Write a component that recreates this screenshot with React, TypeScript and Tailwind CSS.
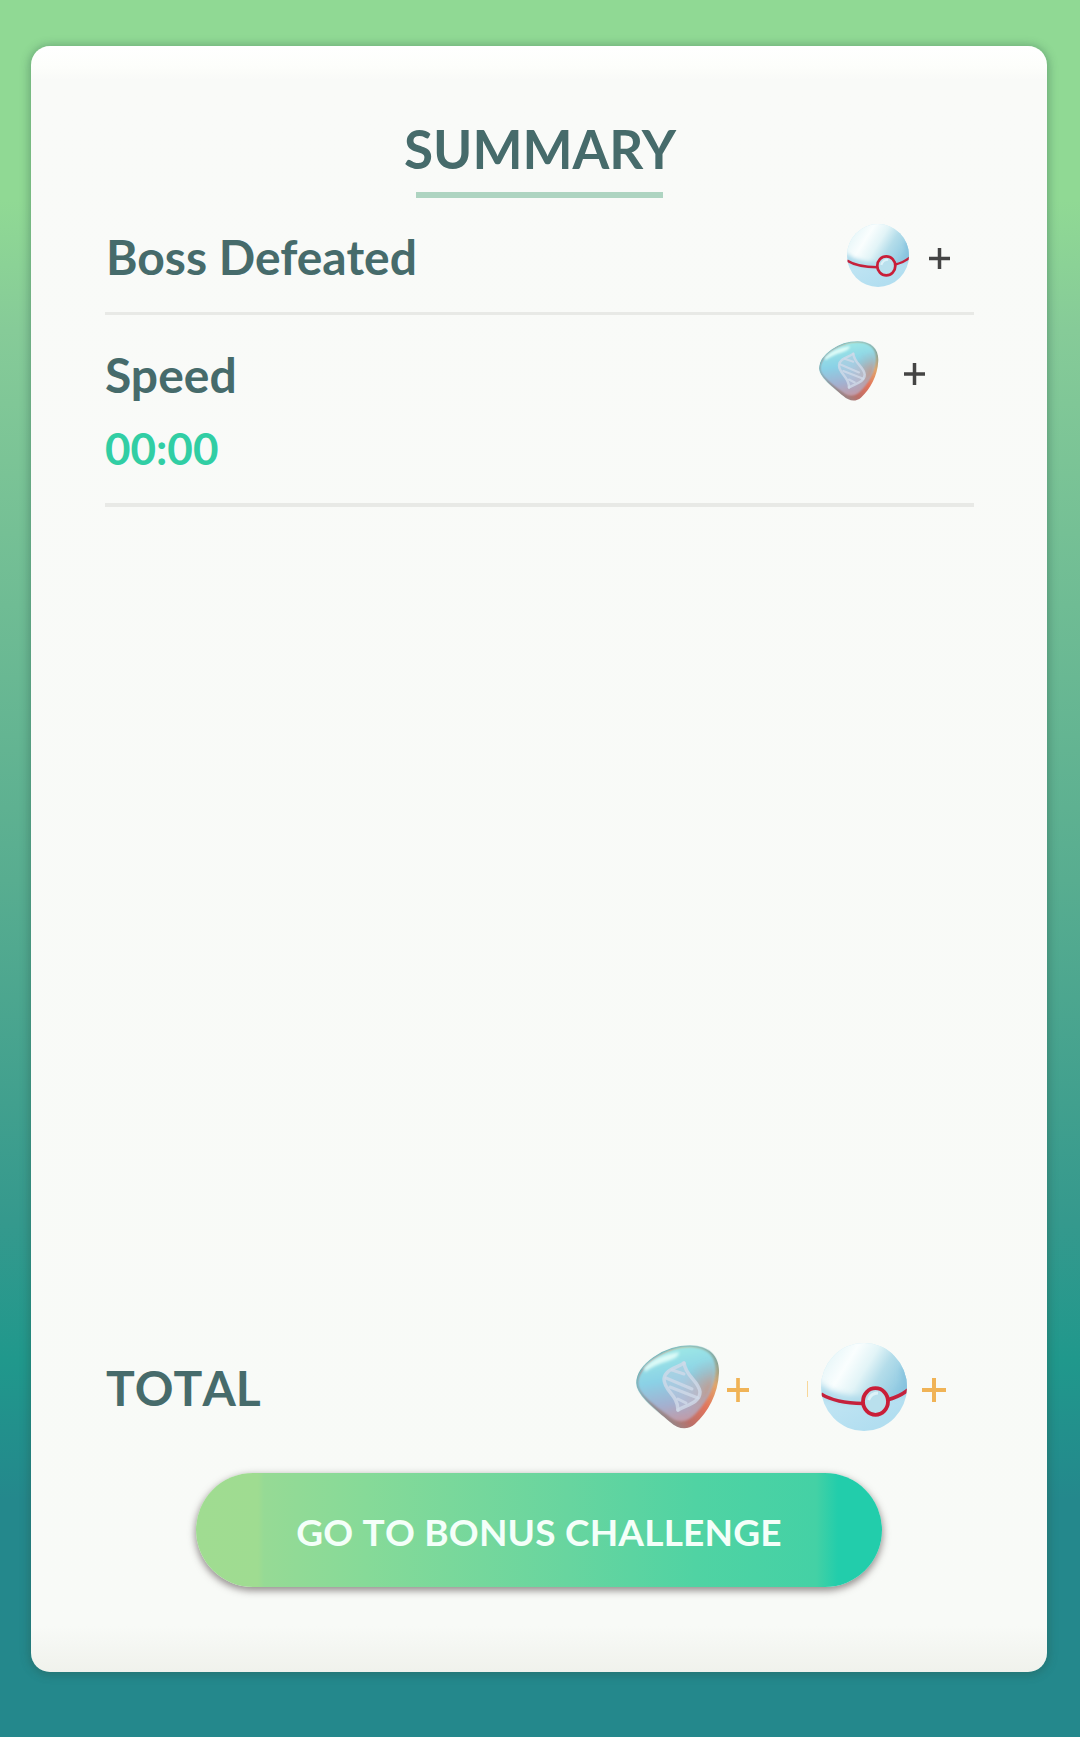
import React from 'react';

function PremierBall({ className, id }: { className: string; id: string }) {
  return (
    <svg viewBox="0 0 86 88" preserveAspectRatio="none" className={className}>
      <defs>
        <linearGradient id={`${id}-top`} x1="0.1" y1="0.25" x2="0.95" y2="0.6">
          <stop offset="0" stopColor="#e9f7f9" />
          <stop offset="0.25" stopColor="#fafefe" />
          <stop offset="0.5" stopColor="#e2f4f7" />
          <stop offset="0.72" stopColor="#b4ddea" />
          <stop offset="1" stopColor="#96cde3" />
        </linearGradient>
        <linearGradient id={`${id}-base`} x1="0" y1="0" x2="0.5" y2="1">
          <stop offset="0" stopColor="#d2edf7" />
          <stop offset="1" stopColor="#b2def0" />
        </linearGradient>
        <clipPath id={`${id}-clip`}>
          <ellipse cx="43" cy="44" rx="43" ry="44" />
        </clipPath>
        <filter id={`${id}-soft`} x="-20%" y="-20%" width="140%" height="140%">
          <feGaussianBlur stdDeviation="3" />
        </filter>
      </defs>
      <g clipPath={`url(#${id}-clip)`}>
        <rect width="86" height="88" fill={`url(#${id}-base)`} />
        <path d="M0 0H86V48Q74 56 58 57Q20 60 0 51Z" fill={`url(#${id}-top)`} />
        <path d="M-4 38Q12 54 42 54L42 61Q10 60 -4 52Z" fill="#a9d8ea" filter={`url(#${id}-soft)`} />
        <path d="M80 26Q86 44 70 54L90 49V22Z" fill="#86c2de" filter={`url(#${id}-soft)`} />
        <path d="M0 51Q14 60 42 60.500M66 57Q78 54 87 47" fill="none" stroke="#c5213c" strokeWidth="3.6" />
      </g>
      <ellipse cx="54.500" cy="58.500" rx="12.500" ry="13.300" fill="#b9e0ed" stroke="#c91e38" strokeWidth="3.8" />
      <path d="M47.500 57Q50 50 57 50" fill="none" stroke="#ddf2f8" strokeWidth="3" />
    </svg>
  );
}

function DamageGem({ className, id }: { className: string; id: string }) {
  const face = 'M2.500 38C3 21 29 2.500 53 2.500C71 2.500 79 11 78.500 25C78 43 67 61 56 71C49 77 41 77 34 71C21 61 2 49 2.500 38Z';
  return (
    <svg viewBox="0 0 84 84" className={className}>
      <defs>
        <linearGradient id={`${id}-rim`} x1="0.15" y1="0.85" x2="0.95" y2="0.15">
          <stop offset="0" stopColor="#7d979f" />
          <stop offset="0.3" stopColor="#bb6f68" />
          <stop offset="0.55" stopColor="#e2745c" />
          <stop offset="0.8" stopColor="#e3a568" />
          <stop offset="1" stopColor="#86a59a" />
        </linearGradient>
        <linearGradient id={`${id}-edge`} x1="0.2" y1="0.2" x2="0.6" y2="0.6">
          <stop offset="0" stopColor="#6fa9ad" />
          <stop offset="1" stopColor="#6fa9ad" stopOpacity="0" />
        </linearGradient>
        <linearGradient id={`${id}-face`} x1="0.4" y1="0" x2="0.6" y2="1">
          <stop offset="0" stopColor="#9ee9e6" />
          <stop offset="0.42" stopColor="#8ad1e6" />
          <stop offset="0.75" stopColor="#a3b0d0" />
          <stop offset="1" stopColor="#c29aa6" />
        </linearGradient>
        <radialGradient id={`${id}-warm`} cx="1.02" cy="0.62" r="0.48">
          <stop offset="0" stopColor="#d98a5c" stopOpacity="0.8" />
          <stop offset="1" stopColor="#c29a98" stopOpacity="0" />
        </radialGradient>
        <filter id={`${id}-soft`} x="-20%" y="-20%" width="140%" height="140%">
          <feGaussianBlur stdDeviation="1.4" />
        </filter>
      </defs>
      <path d="M1 38C1 20 28 1 54 1C74 1 84 12 83 28C82 49 72 67 59 79C51 86 42 84 34 77C20 65 1 50 1 38Z" fill={`url(#${id}-rim)`} stroke={`url(#${id}-edge)`} strokeWidth="1.5" />
      <path d={face} fill={`url(#${id}-face)`} filter={`url(#${id}-soft)`} />
      <path d={face} fill={`url(#${id}-face)`} filter={`url(#${id}-soft)`} />
      <path d={face} fill={`url(#${id}-warm)`} filter={`url(#${id}-soft)`} />
      <path d="M8 23Q20 10 43 7Q44 12 32 16Q18 20 9 27Z" fill="#dcfaf7" filter={`url(#${id}-soft)`} />
      <path d="M48 18C41 23 29 24 28 34C28 46 42 50 42 65C50 60 64 58 64 47C63 36 50 32 48 18Z" fill="#c3cbdf" fillOpacity="0.45" />
      <g fill="none" stroke="#d0d9e8" strokeOpacity="0.8" strokeLinecap="round" strokeLinejoin="round">
        <path d="M48 18C41 23 29 24 28 34C28 46 42 50 42 65" strokeWidth="3.5" />
        <path d="M48 18C50 32 63 36 64 47C64 58 50 60 42 65" strokeWidth="3.5" />
        <path d="M36 25L48 29M30 33L56 44M34 42L62 53M42 54L50 58" strokeWidth="3" />
      </g>
    </svg>
  );
}

function Plus({ className }: { className: string }) {
  return (
    <svg viewBox="0 0 24 24" preserveAspectRatio="none" className={className}>
      <path d="M12 0V24M0 12H24" fill="none" stroke="currentColor" strokeWidth="4" />
    </svg>
  );
}

export default function App() {
  return (
    <main className="flex h-[1737px] w-[1080px] flex-col bg-[linear-gradient(180deg,#90d994_0px,#90d994_200px,#86cb98_330px,#58ad90_880px,#35998d_1220px,#20988c_1360px,#24888c_1500px,#24888c_1737px)] pt-[46px] pl-[31px] font-['Lato',sans-serif] font-bold text-[#466b6b]">
      <section className="flex h-[1626px] w-[1016px] flex-col rounded-[19px] bg-[linear-gradient(180deg,#ffffff_0px,#fdfefb_20px,#f9faf8_34px,#f8faf7_1580px,#f0f2ec_1626px)] px-[74px] shadow-[0_1px_8px_2px_rgba(40,80,70,0.35)]">
        <header className="flex h-[152px] flex-col items-center">
          <h1 className="mt-[63px] ml-[2px] h-[83px] whitespace-nowrap text-[53px] leading-[80px]">SUMMARY</h1>
          <div className="h-[6px] w-[247px] shrink-0 bg-[#aed4c1]" />
        </header>

        <div className="-mr-px flex h-[117px] items-start justify-between border-b-3 border-[#e8e9e6]">
          <h2 className="mt-[19px] ml-px whitespace-nowrap text-[48px] leading-[80px]">Boss Defeated</h2>
          <div className="mt-[26px] mr-[24px] flex items-center">
            <PremierBall id="ball-small" className="h-[63px] w-[62px]" />
            <Plus className="mt-[5px] ml-[20px] h-[21px] w-[21px] text-[#444444]" />
          </div>
        </div>

        <div className="-mr-px flex h-[192px] items-start justify-between border-b-4 border-[#e8e9e6]">
          <div>
            <h2 className="mt-[20px] whitespace-nowrap text-[48px] leading-[80px]">Speed</h2>
            <p className="text-[44px] leading-[66px] text-[#31cea4]">00:00</p>
          </div>
          <div className="mt-[26px] mr-[49px] flex items-center">
            <DamageGem id="gem-small" className="size-[60px]" />
            <Plus className="mt-[6px] ml-[25px] h-[22px] w-[21px] text-[#444444]" />
          </div>
        </div>

        <div className="mt-auto flex h-[90px] items-center justify-between">
          <h2 className="mt-px ml-px whitespace-nowrap text-[48px] leading-[80px] [font-kerning:none]">TOTAL</h2>
          <div className="mr-[27px] flex items-center">
            <DamageGem id="gem-large" className="-ml-px size-[84px]" />
            <Plus className="mt-[6px] ml-[7px] h-[24px] w-[22px] text-[#f0b356]" />
            <div className="mt-[4px] ml-[58px] h-[16px] w-px bg-[#f8d79a]" />
            <PremierBall id="ball-large" className="ml-[13px] h-[88px] w-[86px]" />
            <Plus className="mt-[6px] ml-[15px] h-[24px] w-[24px] text-[#f0b356]" />
          </div>
        </div>

        <button className="mt-[41px] mb-[85px] ml-[91px] h-[114px] w-[686px] shrink-0 rounded-full bg-[linear-gradient(90deg,#a0dc91_0px,#9fdc91_62px,#96da95_68px,#86da98_170px,#68d59f_370px,#50d3a3_500px,#44d1a5_620px,#22cdab_642px)] pt-[4px] text-[37px] font-bold tracking-[0.2px] whitespace-nowrap text-[#f4fff9] shadow-[0_3px_7px_1px_rgba(60,50,50,0.5)] [font-kerning:none]">
          GO TO BONUS CHALLENGE
        </button>
      </section>
    </main>
  );
}
